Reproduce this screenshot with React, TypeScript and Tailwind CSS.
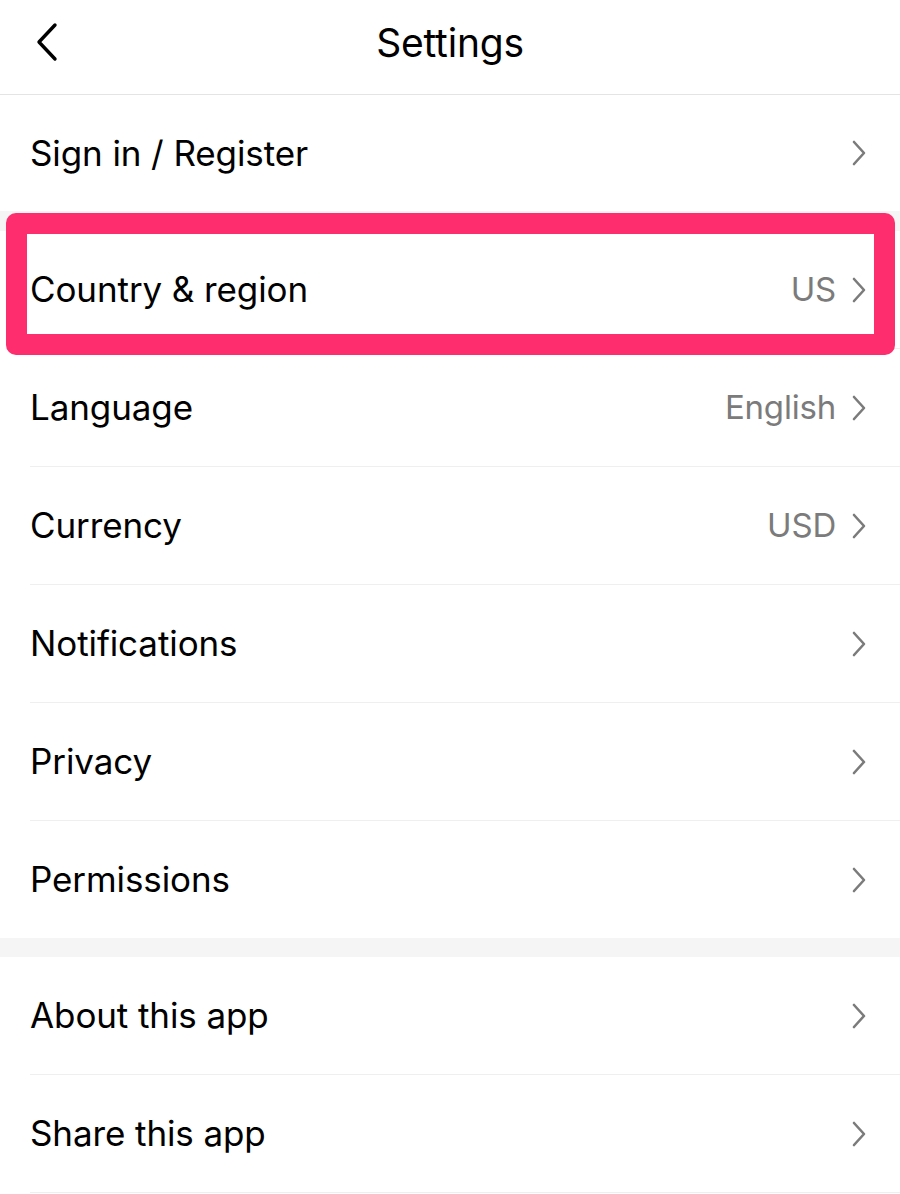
import React from 'react';

type Row = { label: string; value?: string };

const ChevronRight = () => (
  <svg width="18" height="28" viewBox="0 0 18 28" fill="none" className="shrink-0">
    <path d="M4 3l10 11-10 11" stroke="#7b7b7b" strokeWidth="2.6" strokeLinecap="round" strokeLinejoin="round" />
  </svg>
);

const SettingsRow: React.FC<{ row: Row; divider?: boolean; first?: boolean }> = ({ row, divider, first }) => (
  <div className="pl-[30px]">
    <div
      className={`flex items-center justify-between pr-[32px] ${first ? 'h-[116px]' : divider ? 'h-[118px] border-b border-[#efefef]' : 'h-[117px]'}`}
    >
      <span className="text-[35px] text-black tracking-[-0.1px]">{row.label}</span>
      <div className="flex items-center gap-[14px]">
        {row.value && <span className="text-[33px] text-[#7b7b7b] tracking-[-0.2px]">{row.value}</span>}
        <ChevronRight />
      </div>
    </div>
  </div>
);

const App: React.FC = () => {
  const general: Row[] = [
    { label: 'Country & region', value: 'US' },
    { label: 'Language', value: 'English' },
    { label: 'Currency', value: 'USD' },
    { label: 'Notifications' },
    { label: 'Privacy' },
    { label: 'Permissions' },
  ];
  const about: Row[] = [{ label: 'About this app' }, { label: 'Share this app' }];

  return (
    <div className="w-[900px] min-h-[1194px] bg-white relative" style={{ fontFamily: 'Inter, "Noto Sans", sans-serif' }}>
      <header className="h-[95px] border-b border-[#e4e4e4] flex items-center justify-center relative">
        <svg width="24" height="40" viewBox="0 0 24 40" fill="none" className="absolute left-[36px] top-[22px]">
          <path d="M19 3L3 20l16 17" stroke="#000" strokeWidth="3.4" strokeLinecap="round" strokeLinejoin="round" />
        </svg>
        <h1 className="text-[39px] text-black tracking-[-0.2px] -mt-[8px]">Settings</h1>
      </header>

      <SettingsRow row={{ label: 'Sign in / Register' }} first />
      <div className="h-[20px] bg-[#f5f5f5]" />

      {general.map((row, i) => (
        <SettingsRow key={row.label} row={row} divider={i < general.length - 1} />
      ))}
      <div className="h-[19px] bg-[#f5f5f5]" />

      {about.map((row) => (
        <SettingsRow key={row.label} row={row} divider />
      ))}

      {/* highlight around the selected row */}
      <div className="absolute left-[6px] top-[213px] w-[889px] h-[142px] border-[21px] border-[#fe2d6e] rounded-[10px] pointer-events-none" />
    </div>
  );
};

export default App;
